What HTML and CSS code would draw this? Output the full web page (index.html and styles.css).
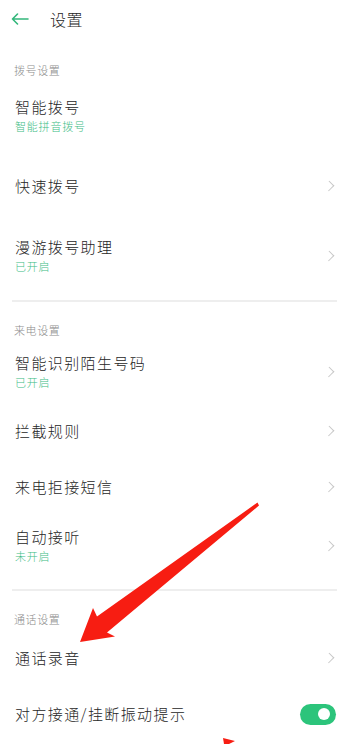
FILE: index.html
```html
<!DOCTYPE html>
<html lang="zh-CN">
<head>
    <meta charset="UTF-8">
    <meta name="viewport" content="width=device-width, initial-scale=1.0">
    <title>设置</title>
    <link rel="stylesheet" href="styles.css">
</head>
<body>
    <div class="page">
        <header class="topbar">
            <svg class="back-icon" width="18" height="12" viewBox="0 0 18 12">
                <path d="M17 6H1.5M6.5 1L1.5 6l5 5" />
            </svg>
            <span class="topbar-title">设置</span>
        </header>

        <section class="group">
            <div class="group-title">拨号设置</div>
            <div class="row row-lg">
                <div class="row-text">
                    <div class="row-name">智能拨号</div>
                    <div class="row-sub">智能拼音拨号</div>
                </div>
            </div>
            <div class="row row-lg">
                <div class="row-text">
                    <div class="row-name">快速拨号</div>
                </div>
                <span class="chevron"></span>
            </div>
            <div class="row row-lg">
                <div class="row-text">
                    <div class="row-name">漫游拨号助理</div>
                    <div class="row-sub">已开启</div>
                </div>
                <span class="chevron"></span>
            </div>
        </section>
        <div class="divider divider-first"></div>

        <section class="group">
            <div class="group-title">来电设置</div>
            <div class="row row-md">
                <div class="row-text">
                    <div class="row-name">智能识别陌生号码</div>
                    <div class="row-sub">已开启</div>
                </div>
                <span class="chevron"></span>
            </div>
            <div class="row">
                <div class="row-text">
                    <div class="row-name">拦截规则</div>
                </div>
                <span class="chevron"></span>
            </div>
            <div class="row">
                <div class="row-text">
                    <div class="row-name">来电拒接短信</div>
                </div>
                <span class="chevron"></span>
            </div>
            <div class="row row-md">
                <div class="row-text">
                    <div class="row-name">自动接听</div>
                    <div class="row-sub">未开启</div>
                </div>
                <span class="chevron"></span>
            </div>
        </section>
        <div class="divider"></div>

        <section class="group">
            <div class="group-title">通话设置</div>
            <div class="row">
                <div class="row-text">
                    <div class="row-name">通话录音</div>
                </div>
                <span class="chevron"></span>
            </div>
            <div class="row">
                <div class="row-text">
                    <div class="row-name">对方接通/挂断振动提示</div>
                </div>
                <span class="switch"></span>
            </div>
        </section>

        <!-- 标注箭头 -->
        <svg class="annotation" width="356" height="744" viewBox="0 0 356 744">
            <polygon points="257.5,502.5 259,505.5 107,632.5 115,636.5 80,642 93,608 97,616.5" />
            <polygon points="223,738 235,741 229,744 224,744" />
        </svg>
    </div>
</body>
</html>
```

FILE: styles.css
```css
:root {
    --green: #3dbd84;
    --switch-green: #2cc47b;
    --text: #262626;
    --muted: #8c8c8c;
    --line: #eeeeee;
}

* {
    margin: 0;
    padding: 0;
    box-sizing: border-box;
}

body {
    background: #fff;
    font-family: 'Noto Sans CJK SC', 'Noto Sans', sans-serif;
    font-weight: 300;
    color: var(--text);
}

.page {
    position: relative;
    width: 356px;
    height: 744px;
    overflow: hidden;
}

.topbar {
    height: 42px;
    display: flex;
    align-items: center;
    padding: 0 0 4px 11px;
}

.back-icon {
    fill: none;
    stroke: #33b77b;
    stroke-width: 1.6;
    stroke-linecap: round;
    stroke-linejoin: round;
}

.topbar-title {
    margin-left: 21px;
    font-size: 16px;
    letter-spacing: 0.5px;
    line-height: 20px;
}

.group-title {
    padding: 17px 14px 0;
    font-size: 11px;
    line-height: 22px;
    letter-spacing: 0.6px;
    color: var(--muted);
}

.row {
    height: 56px;
    display: flex;
    align-items: center;
    padding: 0 20px 0 15px;
}

.row-md {
    height: 62px;
}

.row-lg {
    height: 70px;
}

.row-text {
    flex: 1;
}

.row-name {
    font-size: 15px;
    line-height: 20px;
    letter-spacing: 1.4px;
}

.row-sub {
    font-size: 11px;
    line-height: 18px;
    letter-spacing: 0.8px;
    color: var(--green);
}

.chevron {
    width: 8px;
    height: 8px;
    margin-right: 3px;
    border-top: 1.3px solid #c6c6c6;
    border-right: 1.3px solid #c6c6c6;
    transform: rotate(45deg) scaleX(0.9);
}

.switch {
    position: relative;
    width: 36px;
    height: 21px;
    border-radius: 11px;
    background: var(--switch-green);
}

.switch::after {
    content: "";
    position: absolute;
    right: 6px;
    top: 4.5px;
    width: 12px;
    height: 12px;
    border-radius: 50%;
    background: #fff;
}

.divider {
    height: 2px;
    margin: 12px 19px 0 12px;
    background: var(--line);
}

.divider-first {
    margin-top: 9px;
}

.annotation {
    position: absolute;
    top: 0;
    left: 0;
    pointer-events: none;
    fill: #f71d12;
}
```
